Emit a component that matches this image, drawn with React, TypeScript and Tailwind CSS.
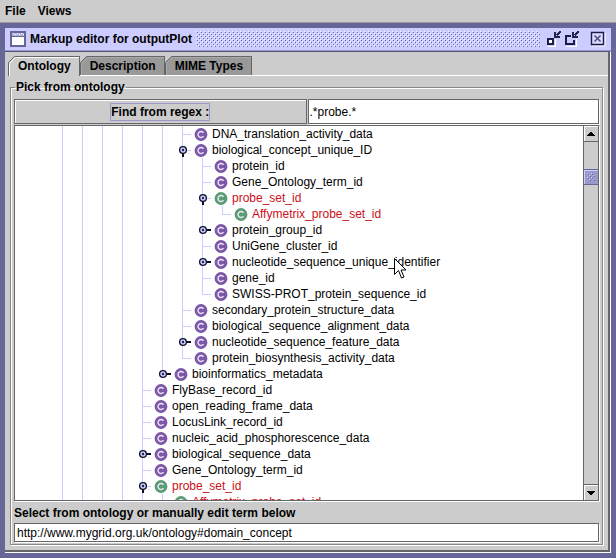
import React from "react";

type Handle = "open" | "closed";
type Node = { label: string; depth: number; guides: number[]; last?: boolean; handle?: Handle; match?: boolean };

const base = [0, 1, 2, 3];
const mid = [0, 1, 2, 3, 4, 5];
const deep = [0, 1, 2, 3, 4, 5, 6];

const nodes: Node[] = [
  { label: "DNA_translation_activity_data", depth: 6, guides: mid },
  { label: "biological_concept_unique_ID", depth: 6, guides: mid, handle: "open" },
  { label: "protein_id", depth: 7, guides: deep },
  { label: "Gene_Ontology_term_id", depth: 7, guides: deep },
  { label: "probe_set_id", depth: 7, guides: deep, handle: "open", match: true },
  { label: "Affymetrix_probe_set_id", depth: 8, guides: [...deep, 7], last: true, match: true },
  { label: "protein_group_id", depth: 7, guides: deep, handle: "closed" },
  { label: "UniGene_cluster_id", depth: 7, guides: deep },
  { label: "nucleotide_sequence_unique_identifier", depth: 7, guides: deep, handle: "closed" },
  { label: "gene_id", depth: 7, guides: deep },
  { label: "SWISS-PROT_protein_sequence_id", depth: 7, guides: deep, last: true },
  { label: "secondary_protein_structure_data", depth: 6, guides: mid },
  { label: "biological_sequence_alignment_data", depth: 6, guides: mid },
  { label: "nucleotide_sequence_feature_data", depth: 6, guides: mid, handle: "closed" },
  { label: "protein_biosynthesis_activity_data", depth: 6, guides: mid, last: true },
  { label: "bioinformatics_metadata", depth: 5, guides: [...base, 4], last: true, handle: "closed" },
  { label: "FlyBase_record_id", depth: 4, guides: base },
  { label: "open_reading_frame_data", depth: 4, guides: base },
  { label: "LocusLink_record_id", depth: 4, guides: base },
  { label: "nucleic_acid_phosphorescence_data", depth: 4, guides: base },
  { label: "biological_sequence_data", depth: 4, guides: base, handle: "closed" },
  { label: "Gene_Ontology_term_id", depth: 4, guides: base },
  { label: "probe_set_id", depth: 4, guides: base, handle: "open", match: true },
  { label: "Affymetrix_probe_set_id", depth: 5, guides: [...base, 4], last: true, match: true },
];

function Connector({ last, handle }: { last?: boolean; handle?: Handle }) {
  return (
    <svg className="h-4 w-3 shrink-0 overflow-visible" viewBox="0 0 12 16" shapeRendering="crispEdges" aria-hidden="true">
      <path d={last ? "M0 0h1v9h-1z" : "M0 0h1v16h-1z"} fill="#ccccff" />
      <path d="M1 8h8v1h-8z" fill="#ccccff" />
      {handle && (
        <g shapeRendering="auto">
          <path d={handle === "open" ? "M0 10h2v5h-2z" : "M3 7h6v2h-6z"} fill="#0c0c24" />
          <circle cx="1" cy="8" r="3.4" fill="#ccccff" stroke="#12122e" strokeWidth="1.3" />
          <circle cx="1" cy="8" r="1.2" fill="#26264e" />
        </g>
      )}
    </svg>
  );
}

function ClassIcon({ match }: { match?: boolean }) {
  return (
    <svg className="h-4 w-[14px] shrink-0" viewBox="0 0 14 16" aria-hidden="true">
      <circle cx="7" cy="8.5" r="6.4" fill={match ? "#5c9c74" : "#7c58a8"} />
      <path d="M9.5 6.8A3 3 0 1 0 9.5 10.2" fill="none" stroke="#f0e8f8" strokeWidth="1.4" />
    </svg>
  );
}

function TreeRow({ node }: { node: Node }) {
  const cells = Array.from({ length: node.depth }, (_, i) => i);
  return (
    <li role="treeitem" aria-level={node.depth + 1} className="flex h-4 items-center whitespace-nowrap">
      {cells.map((i) => (
        <span key={i} className={node.guides.includes(i) ? "h-4 w-5 shrink-0 border-l border-[#ccccff]" : "h-4 w-5 shrink-0"} />
      ))}
      <Connector last={node.last} handle={node.handle} />
      <ClassIcon match={node.match} />
      <span className={node.match ? "pl-1 leading-4 text-[#cc1020]" : "pl-1 leading-4"}>{node.label}</span>
    </li>
  );
}

function Tab({ label, active }: { label: string; active?: boolean }) {
  return (
    <button
      role="tab"
      aria-selected={!!active}
      className={
        active
          ? "relative h-5 border-r border-[#666] bg-[#ccc] pl-[10px] pr-2 font-bold"
          : "relative h-[19px] border-r border-[#666] bg-[#999] pl-[10px] pr-2 font-bold"
      }
    >
      <svg className="absolute inset-0 h-full w-full" aria-hidden="true">
        <path d="M0 0h7l-7 7z" fill="#ccc" />
        <path d="M.5 20V6.5l6-6H200" fill="none" stroke="#666" />
        <path d="M1.5 20V7.5l6-6H200" fill="none" stroke={active ? "#fff" : "#aaa"} />
      </svg>
      <span className="relative">{label}</span>
    </button>
  );
}

function Bumps() {
  return (
    <svg className="h-4 min-w-0 flex-1" shapeRendering="crispEdges" aria-hidden="true">
      <defs>
        <pattern id="bumps" width="4" height="4" patternUnits="userSpaceOnUse">
          <path d="M0 0h1v1h-1zM2 2h1v1h-1z" fill="#f4f4ff" />
          <path d="M1 1h1v1h-1zM3 3h1v1h-1z" fill="#6666a8" />
        </pattern>
      </defs>
      <rect width="100%" height="100%" fill="url(#bumps)" />
    </svg>
  );
}

function TitleBar() {
  return (
    <header className="flex h-[23px] shrink-0 items-center border-b border-[#9999cc] bg-[#ccccff] px-[5px]">
      <svg className="h-4 w-4 shrink-0" viewBox="0 0 16 16" shapeRendering="crispEdges" aria-hidden="true">
        <rect x="1" y="1" width="14" height="14" fill="#fff" stroke="#666699" strokeWidth="2" />
        <path d="M2 2h12v3H2z" fill="#b4b4dc" />
        <path d="M3 2h1v1h-1zM5 3h1v1h-1zM7 2h1v1h-1zM9 3h1v1h-1zM11 2h1v1h-1zM13 3h1v1h-1z" fill="#fff" />
        <path d="M2 5h12v1H2z" fill="#666699" />
      </svg>
      <h1 className="px-1 font-bold">Markup editor for outputPlot</h1>
      <Bumps />
      <div className="flex gap-[2px] pl-[6px]">
        <button aria-label="Minimize" className="h-4 w-4">
          <svg className="h-4 w-4" viewBox="0 0 16 16" shapeRendering="crispEdges">
            <path d="M2 15h7V8" fill="none" stroke="#fff" />
            <path d="M2 8h5v5h-5z" fill="#fff" stroke="#1c1c48" strokeWidth="2" />
            <path d="M8 1h2v4h4v2h-6zM10 4l3-4h2v1l-4 4z" fill="#24244e" />
          </svg>
        </button>
        <button aria-label="Maximize" className="h-4 w-4">
          <svg className="h-4 w-4" viewBox="0 0 16 16" shapeRendering="crispEdges">
            <path d="M2 15h10V8" fill="none" stroke="#fff" />
            <path d="M7 5H2v8h8V9" fill="none" stroke="#1c1c48" strokeWidth="2" />
            <path d="M8 1h2v4h4v2h-6zM10 4l3-4h2v1l-4 4z" fill="#24244e" />
          </svg>
        </button>
        <button aria-label="Close" className="ml-2 h-4 w-4">
          <svg className="h-4 w-4" viewBox="0 0 16 16">
            <path d="M2 15h13V2" fill="none" stroke="#fff" />
            <path d="M1.5 1.5h12v12h-12z" fill="#dcdcff" stroke="#1c1c48" strokeWidth="1.4" />
            <path d="M4.5 4.5l6 6M10.500 4.500l-6 6" fill="none" stroke="#50508a" strokeWidth="1.7" />
          </svg>
        </button>
      </div>
    </header>
  );
}

function ScrollBar() {
  return (
    <div className="flex w-4 shrink-0 flex-col border-x border-[#666] bg-[#ccc]">
      <button aria-label="Scroll up" className="flex h-4 w-full shrink-0 items-center justify-center border-b border-[#666] shadow-[inset_1px_1px_0_#fff]">
        <svg className="h-1 w-2" viewBox="0 0 8 4" shapeRendering="crispEdges"><path d="M3 0h2v1h1v1h1v1h1v1h-8v-1h1v-1h1v-1h1z" /></svg>
      </button>
      <div className="mt-[27px] h-4 shrink-0 border-y border-[#666699] bg-[#9999cc] shadow-[inset_1px_1px_0_#ccccff]">
        <svg className="h-full w-full" shapeRendering="crispEdges" aria-hidden="true">
          <path d="M3 3h1v1h-1zM7 3h1v1h-1zM5 5h1v1h-1zM9 5h1v1h-1zM3 7h1v1h-1zM7 7h1v1h-1zM5 9h1v1h-1zM9 9h1v1h-1z" fill="#ccccff" />
          <path d="M4 4h1v1h-1zM8 4h1v1h-1zM6 6h1v1h-1zM10 6h1v1h-1zM4 8h1v1h-1zM8 8h1v1h-1zM6 10h1v1h-1zM10 10h1v1h-1z" fill="#666699" />
        </svg>
      </div>
      <div className="flex-1" />
      <button aria-label="Scroll down" className="flex h-4 w-full shrink-0 items-center justify-center border-t border-[#666] shadow-[inset_1px_1px_0_#fff]">
        <svg className="h-1 w-2" viewBox="0 0 8 4" shapeRendering="crispEdges"><path d="M0 0h8v1h-1v1h-1v1h-1v1h-2v-1h-1v-1h-1v-1h-1z" /></svg>
      </button>
    </div>
  );
}

export default function App() {
  return (
    <div className="relative flex h-screen flex-col overflow-hidden bg-[#666699] font-['Liberation_Sans',Arial,sans-serif] text-xs text-black">
      <nav className="flex h-[23px] shrink-0 items-center gap-3 border-b border-[#999] bg-[#ccc] px-[5px] font-bold">
        <button>File</button>
        <button>Views</button>
      </nav>
      <main className="m-[5px] flex min-h-0 flex-1 flex-col">
        <TitleBar />
        <div className="flex min-h-0 flex-1 flex-col border-b border-r border-t border-white border-t-[#555577] bg-[#ccc]">
          <div className="flex min-h-0 flex-1 flex-col border-b-2 border-r-2 border-[#666] pt-1">
            <div role="tablist" className="flex h-5 shrink-0 items-start pl-[3px]">
              <Tab label="Ontology" active />
              <Tab label="Description" />
              <Tab label="MIME Types" />
              <div className="-ml-[172px] flex-1 self-end border-b border-white" />
            </div>
            <div className="flex min-h-0 flex-1 flex-col px-[5px] pb-[5px] pt-[3px]">
              <fieldset className="flex min-h-0 min-w-0 flex-1 flex-col border border-[#888] pb-[2px] pl-[3px] pr-[3px] shadow-[inset_1px_1px_0_#fff,1px_1px_0_#fff]">
                <legend className="ml-px px-[1px] font-bold leading-4">Pick from ontology</legend>
                <div className="mt-1 grid h-[26px] shrink-0 grid-cols-2 pb-px">
                  <button className="border border-[#666] font-bold shadow-[inset_1px_1px_0_#fff]">
                    <span className="border border-[#9999cc] py-px">Find from regex :</span>
                  </button>
                  <input aria-label="Regular expression" defaultValue=".*probe.*" className="ml-px min-w-0 border border-[#666] bg-white px-px shadow-[1px_1px_0_#fff]" />
                </div>
                <div className="flex min-h-0 flex-1 border border-r-0 border-[#666] bg-white shadow-[1px_1px_0_#fff]">
                  <ul role="tree" className="min-h-0 min-w-0 flex-1 overflow-hidden pl-[47px]">
                    {nodes.map((node, i) => (
                      <TreeRow key={i} node={node} />
                    ))}
                  </ul>
                  <ScrollBar />
                </div>
                <label htmlFor="term" className="h-[22px] shrink-0 font-bold leading-[24px]">Select from ontology or manually edit term below</label>
                <input id="term" defaultValue="http://www.mygrid.org.uk/ontology#domain_concept" className="h-[19px] shrink-0 border border-[#666] bg-white px-[2px] shadow-[1px_1px_0_#fff]" />
              </fieldset>
            </div>
          </div>
        </div>
      </main>
      <svg className="absolute left-[394px] top-[258px] h-[21px] w-3" viewBox="0 0 12 21" aria-hidden="true">
        <path d="M.5 .5v16l4-4 3 7.500 2.500-1-3-7h5z" fill="#fff" stroke="#000" />
      </svg>
    </div>
  );
}
